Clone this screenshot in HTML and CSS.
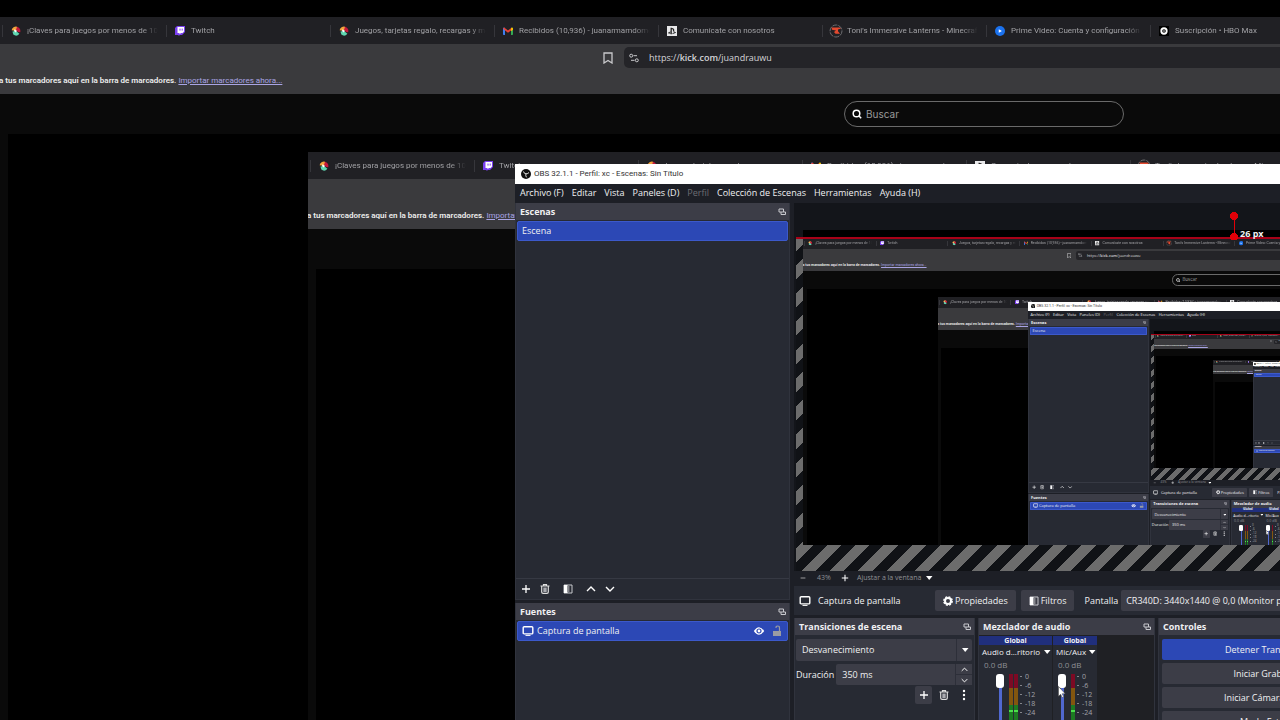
FILE: index.html
```html
<!DOCTYPE html>
<html lang="es">
<head>
    <meta charset="UTF-8">
    <meta name="viewport" content="width=device-width, initial-scale=1.0">
    <title>OBS 32.1.1</title>
    <link rel="stylesheet" href="styles.css">
</head>
<body>

<svg class="sprites" aria-hidden="true">
    <symbol id="i-wheel" viewBox="0 0 10 10">
        <path d="M5 5L.6 4.2A4.5 4.5 0 0 1 6 .7L7.5 3.2z" fill="#f2a33c"/>
        <path d="M5 4L6 .7a4.5 4.5 0 0 1 3.2 5.6L7 6z" fill="#c4183c"/>
        <path d="M1.5 5.5L5 5l3.4 2.8A4.5 4.5 0 0 1 2.3 8.6z" fill="#5fd6b0"/>
        <path d="M3.6 3.2L6 5 4.5 6.5 3 5z" fill="#fff"/>
    </symbol>
    <symbol id="i-twitch" viewBox="0 0 10 10">
        <path d="M0 2L2 0h8v6L7 9H5L3.5 10V9H0z" fill="#7a3ff0"/>
        <path d="M2.5 1H9v4.5L7.6 7H6L4.5 8.3V7h-2z" fill="#fff"/>
        <path d="M5 2.6v2M7.2 2.6v2" stroke="#7a3ff0"/>
    </symbol>
    <symbol id="i-gmail" viewBox="0 0 10 8">
        <path d="M0 .8h2V8H.6L0 7.4z" fill="#3f7fee"/>
        <path d="M8 .8h2v6.6L9.4 8H8z" fill="#34a853"/>
        <path d="M0 1.2L1.2.4 5 3.5 8.8.4 8 3.4 5 5.8 2 3.4z" fill="#ea4335"/>
        <path d="M8 1.2L9 .4l1 .8v1.6L8 4.2z" fill="#fbbc04"/>
    </symbol>
    <symbol id="i-ps" viewBox="0 0 11 11">
        <path d="M0 0h11v11H0z" fill="#e8e8ea"/>
        <path d="M4.6 2v7M4.6 2.5c2.5.4 3 1.2 2.6 3.2" fill="none" stroke="#222" stroke-width="1.4"/>
        <path d="M4 6.4L1.6 7.6 4 8M6 8.4l3.4-1.2L7 6.2" fill="none" stroke="#222"/>
    </symbol>
    <symbol id="i-toni" viewBox="0 0 14 14">
        <circle cx="7" cy="7" r="6" fill="none" stroke="#6d6d70" stroke-dasharray="5 1"/>
        <path d="M2.5 3.6h8l1.5 1-3 1v1.6l2 2.6H6.5L5 8l2-1.5-4-.7z" fill="#e2492f"/>
    </symbol>
    <symbol id="i-prime" viewBox="0 0 12 12">
        <circle cx="6" cy="6" r="6" fill="#1b72ee"/>
        <path d="M4.5 3.8L8.3 6 4.5 8.2z" fill="#fff"/>
    </symbol>
    <symbol id="i-hbo" viewBox="0 0 11 11">
        <path d="M0 0h11v11H0z" fill="#000"/>
        <circle cx="5.5" cy="5.5" r="3" fill="none" stroke="#fff" stroke-width="2"/>
        <circle cx="5.5" cy="5.5" r=".8" fill="#fff"/>
    </symbol>
    <symbol id="i-bookmark" viewBox="0 0 10 12">
        <path d="M1 1h8v10L5 8.5 1 11z" fill="none" stroke="#c9c9cc" stroke-width="1.3"/>
    </symbol>
    <symbol id="i-tune" viewBox="0 0 10 9">
        <g fill="none" stroke="#c9c9cc"><circle cx="2.2" cy="2.2" r="1.5"/><path d="M4.5 2.2H8M2 6.8h3.5"/><circle cx="7.8" cy="6.8" r="1.5"/></g>
    </symbol>
    <symbol id="i-search" viewBox="0 0 10 10">
        <g fill="none" stroke="#fff" stroke-width="1.5"><circle cx="4.5" cy="4.5" r="3.3"/><path d="M7 7l2.2 2.2"/></g>
    </symbol>
    <symbol id="i-obs" viewBox="0 0 10 10">
        <circle cx="5" cy="5" r="5" fill="#111"/>
        <path d="M2.5 2.5Q3 4.8 5 4.8T8 3.5M5 4.8Q4.3 7 5.5 8.3" fill="none" stroke="#ddd"/>
    </symbol>
    <symbol id="i-pop" viewBox="0 0 8 8">
        <path d="M1 1h4.5v3H1zM3 4v2.5h4.5V4H5.5" fill="none" stroke="#c8c9ce"/>
    </symbol>
    <symbol id="i-plus" viewBox="0 0 10 10">
        <path d="M5 1v8M1 5h8" stroke="#fff" stroke-width="1.3"/>
    </symbol>
    <symbol id="i-minus" viewBox="0 0 10 10">
        <path d="M2 5h6" stroke="#bbb"/>
    </symbol>
    <symbol id="i-trash" viewBox="0 0 10 10">
        <path d="M.5 2h9M3.5 1.8V.7h3v1.1M1.7 2.5V8q0 1.4 1.4 1.4h3.8Q8.3 9.4 8.3 8V2.5" fill="none" stroke="#ddd" stroke-width="1.2"/>
        <path d="M3.3 3.5h3.4V8H3.3z" fill="#aaabb0"/>
    </symbol>
    <symbol id="i-filter" viewBox="0 0 10 10">
        <path d="M1 1h8v8H1z" fill="none" stroke="#c8c9ce"/>
        <path d="M1 1h3.5v8H1z" fill="#fff"/><path d="M5 2h1.5v6H5z" fill="#85868c"/>
    </symbol>
    <symbol id="i-up" viewBox="0 0 10 10">
        <path d="M1 7l4-4 4 4" fill="none" stroke="#fff" stroke-width="1.4"/>
    </symbol>
    <symbol id="i-down" viewBox="0 0 10 10">
        <path d="M1 3l4 4 4-4" fill="none" stroke="#fff" stroke-width="1.4"/>
    </symbol>
    <symbol id="i-caret" viewBox="0 0 8 8">
        <path d="M1 2h6.5L4.2 6z" fill="#fff"/>
    </symbol>
    <symbol id="i-screen" viewBox="0 0 12 12">
        <rect x="1.2" y="1.7" width="9.6" height="7.2" rx="1" fill="none" stroke="#fff" stroke-width="1.4"/>
        <path d="M3.5 10.4h5" stroke="#fff"/>
    </symbol>
    <symbol id="i-eye" viewBox="0 0 12 10">
        <path d="M.8 5Q6-2.6 11.2 5 6 12.6.8 5z" fill="#fff"/>
        <circle cx="6" cy="5" r="2" fill="none" stroke="#2c48b5" stroke-width="1.2"/>
    </symbol>
    <symbol id="i-lock" viewBox="0 0 10 12">
        <path d="M1 6h8v5H1z" fill="#999ba3"/>
        <path d="M7.5 6V3Q7.5 1 5.7 1T4 3" fill="none" stroke="#999ba3" stroke-width="1.2"/>
    </symbol>
    <symbol id="i-gear" viewBox="0 0 10 10">
        <circle cx="5" cy="5" r="3" fill="none" stroke="#fff" stroke-width="2"/>
        <circle cx="5" cy="5" r="4.2" fill="none" stroke="#fff" stroke-width="1.4" stroke-dasharray="2 1.3"/>
    </symbol>
    <symbol id="i-dots" viewBox="0 0 10 12">
        <circle cx="5" cy="2" r="1.2" fill="#fff"/><circle cx="5" cy="6" r="1.2" fill="#fff"/><circle cx="5" cy="10" r="1.2" fill="#fff"/>
    </symbol>
</svg>

<div class="desktop">
    <div class="browser">
        <nav class="tabs">
            <a class="tab" href="#"><svg><use href="#i-wheel"/></svg><span>¡Claves para juegos por menos de 10€</span></a>
            <a class="tab" href="#"><svg><use href="#i-twitch"/></svg><span>Twitch</span></a>
            <a class="tab" href="#"><svg><use href="#i-wheel"/></svg><span>Juegos, tarjetas regalo, recargas y más</span></a>
            <a class="tab" href="#"><svg><use href="#i-gmail"/></svg><span>Recibidos (10,936) - juanarmamdomo</span></a>
            <a class="tab" href="#"><svg><use href="#i-ps"/></svg><span>Comunícate con nosotros</span></a>
            <a class="tab" href="#"><svg class="big"><use href="#i-toni"/></svg><span>Toni's Immersive Lanterns - Minecraft</span></a>
            <a class="tab" href="#"><svg><use href="#i-prime"/></svg><span>Prime Video: Cuenta y configuración</span></a>
            <a class="tab" href="#"><svg><use href="#i-hbo"/></svg><span>Suscripción • HBO Max</span></a>
        </nav>
        <div class="toolbar">
            <div class="address-row">
                <button class="bookmark" aria-label="Marcador"><svg><use href="#i-bookmark"/></svg></button>
                <div class="address"><svg><use href="#i-tune"/></svg><span>https://<b>kick.com</b>/juandrauwu</span></div>
            </div>
            <p class="bookmarks">a tus marcadores aquí en la barra de marcadores. <a href="#">Importar marcadores ahora...</a></p>
        </div>
        <div class="page">
            <header class="page-header">
                <label class="search"><svg><use href="#i-search"/></svg><input type="text" placeholder="Buscar" aria-label="Buscar"></label>
            </header>
            <div class="stream"></div>
        </div>
    </div>

    <div class="obs">
        <div class="titlebar"><svg><use href="#i-obs"/></svg>OBS 32.1.1 - Perfil: xc - Escenas: Sin Título</div>
        <nav class="menu">
            <button>Archivo (F)</button>
            <button>Editar</button>
            <button>Vista</button>
            <button>Paneles (D)</button>
            <button disabled>Perfil</button>
            <button>Colección de Escenas</button>
            <button>Herramientas</button>
            <button>Ayuda (H)</button>
        </nav>
        <div class="workspace">
            <div class="side">
                <section class="dock scenes">
                    <h2>Escenas <svg><use href="#i-pop"/></svg></h2>
                    <div class="item">Escena</div>
                    <div class="dock-tools">
                        <button aria-label="Añadir"><svg><use href="#i-plus"/></svg></button>
                        <button aria-label="Eliminar"><svg><use href="#i-trash"/></svg></button>
                        <button class="split" aria-label="Filtros"><svg><use href="#i-filter"/></svg></button>
                        <button aria-label="Subir"><svg><use href="#i-up"/></svg></button>
                        <button aria-label="Bajar"><svg><use href="#i-down"/></svg></button>
                    </div>
                </section>
                <section class="dock sources">
                    <h2>Fuentes <svg><use href="#i-pop"/></svg></h2>
                    <div class="item"><svg><use href="#i-screen"/></svg><span>Captura de pantalla</span><svg><use href="#i-eye"/></svg><svg><use href="#i-lock"/></svg></div>
                </section>
            </div>
            <div class="main">
                <div class="preview">
                    <div class="canvas">
                        <div class="capture"></div>
                        <div class="guide">26 px</div>
                    </div>
                </div>
                <div class="zoombar">
                    <button aria-label="Alejar"><svg><use href="#i-minus"/></svg></button>
                    <span class="percent">43%</span>
                    <button aria-label="Acercar"><svg><use href="#i-plus"/></svg></button>
                    <button class="fit">Ajustar a la ventana <svg><use href="#i-caret"/></svg></button>
                </div>
                <div class="context">
                    <svg><use href="#i-screen"/></svg>
                    <span class="source-name">Captura de pantalla</span>
                    <button><svg><use href="#i-gear"/></svg>Propiedades</button>
                    <button><svg><use href="#i-filter"/></svg>Filtros</button>
                    <label>Pantalla
                        <select><option>CR340D: 3440x1440 @ 0,0 (Monitor principal)</option></select>
                    </label>
                </div>
                <div class="bottom">
                    <section class="dock transitions">
                        <h2>Transiciones de escena <svg><use href="#i-pop"/></svg></h2>
                        <div class="combo">
                            <select aria-label="Transición"><option>Desvanecimiento</option></select>
                            <svg><use href="#i-caret"/></svg>
                        </div>
                        <div class="duration">
                            <label>Duración <input type="text" value="350 ms"></label>
                            <div class="spin">
                                <button aria-label="Más"><svg><use href="#i-up"/></svg></button>
                                <button aria-label="Menos"><svg><use href="#i-down"/></svg></button>
                            </div>
                        </div>
                        <div class="transition-tools">
                            <button class="filled" aria-label="Añadir"><svg><use href="#i-plus"/></svg></button>
                            <button aria-label="Eliminar"><svg><use href="#i-trash"/></svg></button>
                            <button aria-label="Opciones"><svg><use href="#i-dots"/></svg></button>
                        </div>
                    </section>
                    <section class="dock mixer">
                        <h2>Mezclador de audio <svg><use href="#i-pop"/></svg></h2>
                        <div class="channels">
                            <div class="channel desktop-audio">
                                <div class="scope">Global</div>
                                <button class="name">Audio d...ritorio <svg><use href="#i-caret"/></svg></button>
                                <div class="db">0.0 dB</div>
                                <div class="levels">
                                    <input type="range" value="100" aria-label="Volumen del escritorio">
                                    <div class="meter"></div><div class="meter"></div>
                                    <ul><li>0</li><li>-6</li><li>-12</li><li>-18</li><li>-24</li></ul>
                                </div>
                            </div>
                            <div class="channel mic">
                                <div class="scope">Global</div>
                                <button class="name">Mic/Aux <svg><use href="#i-caret"/></svg></button>
                                <div class="db">0.0 dB</div>
                                <div class="levels">
                                    <input type="range" value="100" aria-label="Volumen del micrófono">
                                    <div class="meter"></div>
                                    <ul><li>0</li><li>-6</li><li>-12</li><li>-18</li><li>-24</li></ul>
                                </div>
                            </div>
                        </div>
                    </section>
                    <section class="dock controls">
                        <h2>Controles</h2>
                        <button class="active">Detener Transmisión</button>
                        <button>Iniciar Grabación</button>
                        <button>Iniciar Cámara Virtual</button>
                        <button>Modo Estudio</button>
                    </section>
                </div>
            </div>
        </div>
    </div>

    <svg class="cursor" viewBox="0 0 8 12"><path d="M.5.5v9.8l2.2-2 1.5 3.2 1.5-.7-1.5-3.1h3z" fill="#fff" stroke="#444" stroke-width=".5"/></svg>
</div>

<script>
    const desktop = document.querySelector('.desktop');
    const browser = desktop.querySelector('.browser');

    function copyOf(element) {
        const copy = element.cloneNode(true);
        copy.setAttribute('aria-hidden', 'true');
        copy.inert = true;
        return copy;
    }

    // the stream in the page plays back the browser itself
    browser.querySelector('.stream').appendChild(copyOf(browser));

    // the OBS preview shows the whole desktop, preview included
    const frame = copyOf(desktop);
    let slot = desktop.querySelector('.capture');
    for (let i = 0; i < 2; i++) {
        const copy = frame.cloneNode(true);
        slot.appendChild(copy);
        slot = copy.querySelector('.capture');
    }
</script>

</body>
</html>
```
FILE: styles.css
```css
* {
    box-sizing: border-box;
}
body {
    margin: 0;
    background: #000;
    overflow: hidden;
}
button, input, select {
    font: inherit;
    color: inherit;
    background: none;
    border: none;
    padding: 0;
    margin: 0;
    border-radius: 0;
}
svg {
    display: block;
    flex: none;
    width: 10px;
    height: 10px;
}
.sprites {
    display: none;
}
.desktop {
    position: relative;
    height: 100vh;
    background: #000;
    overflow: hidden;
}

/* browser */
.browser {
    height: 100%;
    padding-top: 17px;
    display: flex;
    flex-direction: column;
    font-family: Roboto, sans-serif;
    font-size: 8px;
    overflow: hidden;
}
.tabs {
    flex: none;
    display: flex;
    align-items: center;
    height: 27px;
    padding-left: 2px;
    background: #202024;
}
.tab {
    flex: 0 0 164px;
    display: flex;
    align-items: center;
    gap: 6px;
    min-width: 0;
    height: 12px;
    padding: 0 8px;
    border-left: 1px solid #36363b;
    color: #a0a0a4;
    text-decoration: none;
    line-height: 12px;
}
.tab svg.big {
    width: 14px;
    height: 14px;
    margin: 0 -2px;
}
.tab span {
    flex: 1;
    min-width: 0;
    overflow: hidden;
    white-space: nowrap;
    mask-image: linear-gradient(to right, #000 88%, transparent);
}
.toolbar {
    flex: none;
    height: 50px;
    padding-top: 3px;
    background: #3a3a3d;
}
.address-row {
    display: flex;
    align-items: center;
    gap: 11px;
    padding-left: 603px;
}
.bookmark svg {
    height: 12px;
}
.address {
    flex: 1;
    display: flex;
    align-items: center;
    gap: 10px;
    height: 21px;
    padding-left: 5px;
    border-radius: 5px 0 0 5px;
    background: #242428;
    color: #d4d4d8;
    font-size: 9px;
    font-family: "Open Sans", sans-serif;
    white-space: nowrap;
}
.address b {
    font-weight: 600;
}
.bookmarks {
    margin: 7px 0 0 -1px;
    color: #eee;
    font-weight: 600;
    line-height: 12px;
    white-space: nowrap;
}
.bookmarks a {
    color: #a9a4e4;
    font-weight: 400;
}
.page {
    flex: 1;
    display: flex;
    flex-direction: column;
    background: #0a0a0a;
}
.page-header {
    height: 40px;
    padding: 7px 0 0 844px;
}
.search {
    display: flex;
    align-items: center;
    gap: 4px;
    width: 280px;
    height: 26px;
    padding: 0 7px;
    border: 1px solid #6a6a6a;
    border-radius: 13px;
    color: #9a9a9a;
    font: 10px Inter, sans-serif;
}
.search input {
    width: 100%;
}
.search input::placeholder {
    color: #9a9a9a;
}
.stream {
    position: relative;
    flex: 1;
    margin-left: 8px;
    background: #000;
    overflow: hidden;
}
.stream .browser {
    position: absolute;
    top: 1px;
    left: 300px;
    width: 100%;
}

/* OBS window */
.obs {
    position: absolute;
    top: 164px;
    left: 515px;
    right: -100px;
    bottom: -54px;
    display: flex;
    flex-direction: column;
    background: #1d1f26;
    color: #f0f0f2;
    font-family: "Open Sans", sans-serif;
    font-size: 8px;
    line-height: 12px;
}
.titlebar {
    flex: none;
    display: flex;
    align-items: center;
    gap: 3px;
    height: 20px;
    padding-left: 6px;
    background: #fff;
    color: #333;
    font-family: Roboto, sans-serif;
}
.menu {
    flex: none;
    display: flex;
    align-items: center;
    gap: 8px;
    height: 18px;
    margin-bottom: 1px;
    padding-left: 5px;
    font-size: 9px;
}
.menu button:disabled {
    color: #6c6d73;
}
.workspace {
    flex: 1;
    display: flex;
    gap: 4px;
    min-height: 0;
}
.side {
    flex: 0 0 275px;
    display: flex;
    flex-direction: column;
    gap: 3px;
}
.dock {
    background: #272a33;
    border: 1px solid #30333d;
    border-top: none;
}
.dock h2 {
    display: flex;
    align-items: center;
    justify-content: space-between;
    height: 17px;
    margin: 0;
    padding: 0 3px 0 4px;
    background: #3c3d47;
    font-size: 9px;
    font-weight: 700;
}
.dock h2 svg {
    width: 8px;
    height: 8px;
}
.scenes {
    flex: 1;
    display: flex;
    flex-direction: column;
}
.sources {
    flex: 0 0 171px;
}
.item {
    display: flex;
    align-items: center;
    gap: 3px;
    height: 20px;
    margin: 1px;
    padding: 0 4px;
    border: 1px solid #3c59cb;
    border-radius: 2px;
    background: #2c48b5;
    font-size: 9px;
}
.item svg {
    width: 12px;
    height: 12px;
}
.item svg + svg {
    margin-left: 3px;
}
.item span {
    flex: 1;
}
.dock-tools {
    display: flex;
    align-items: center;
    gap: 9px;
    height: 21px;
    margin-top: auto;
    padding-left: 5px;
    border-top: 1px solid #363943;
}
.dock-tools .split {
    padding: 0 4px;
}
.main {
    flex: 1;
    display: flex;
    flex-direction: column;
    min-width: 0;
}
.preview {
    flex: 1;
    padding: 34px 0 0 2px;
    background: #13151a;
    overflow: hidden;
}
.canvas {
    position: relative;
    height: 100%;
    background: repeating-linear-gradient(135deg, #6c6c6c 0 10px, #101216 10px 20px);
}
.canvas::after {
    content: "";
    position: absolute;
    top: 0;
    left: 0;
    right: 0;
    height: 2px;
    background: #a80218;
}
.capture {
    position: absolute;
    top: -7px;
    left: 7px;
    right: 0;
    bottom: 26px;
}
.capture > .desktop {
    zoom: 0.4375;
    height: 100%;
}
.guide {
    position: absolute;
    z-index: 1;
    top: -25px;
    left: 434px;
    padding: 16px 0 0 10px;
    font-weight: 700;
    font-size: 9px;
    background:
        radial-gradient(circle at 4px 4px, #e00008 4px, transparent 4px),
        radial-gradient(circle at 4px 25px, #e00008 4px, transparent 4px),
        linear-gradient(#e00008, #e00008) 4px 0 / 1px 100% no-repeat;
}
.zoombar {
    flex: none;
    display: flex;
    align-items: center;
    height: 13px;
    margin-bottom: 2px;
    padding-left: 5px;
    color: #8e8f94;
    font-size: 7px;
}
.zoombar svg {
    width: 8px;
    height: 8px;
}
.zoombar .percent {
    width: 34px;
    text-align: center;
}
.zoombar .fit {
    display: flex;
    align-items: center;
    gap: 4px;
    margin-left: 8px;
    line-height: 12px;
}
.context {
    flex: none;
    display: flex;
    align-items: center;
    gap: 5px;
    height: 29px;
    margin-bottom: 3px;
    padding-left: 5px;
    background: #272a33;
    font-size: 9px;
    white-space: nowrap;
}
.context > svg {
    width: 12px;
    height: 12px;
}
.source-name {
    width: 114px;
    padding-left: 2px;
}
.context button {
    display: flex;
    align-items: center;
    gap: 2px;
    height: 21px;
    padding: 0 8px;
    border-radius: 2px;
    background: #3c3d47;
}
.context label {
    flex: 1;
    display: flex;
    align-items: center;
    gap: 3px;
    padding-left: 5px;
}
.context select {
    flex: 1;
    appearance: none;
    height: 21px;
    padding-left: 5px;
    border-radius: 2px;
    background: #3c3d47;
}
.bottom {
    flex: 0 0 156px;
    display: flex;
    gap: 3px;
}
.transitions {
    flex: 0 0 181px;
    font-size: 9px;
}
.combo {
    display: flex;
    align-items: center;
    height: 22px;
    margin: 4px 2px 3px 1px;
    padding-right: 3px;
    border-radius: 2px;
    background: #3c3d47;
}
.combo select {
    flex: 1;
    appearance: none;
    height: 100%;
    padding-left: 6px;
    border-right: 1px solid #2d2f39;
}
.combo svg {
    width: 8px;
    height: 8px;
    margin-left: 4px;
}
.duration {
    display: flex;
    height: 21px;
    margin: 0 2px 0 1px;
}
.duration label {
    flex: 1;
    display: flex;
    align-items: center;
    gap: 2px;
}
.duration input {
    flex: 1;
    width: 0;
    height: 100%;
    padding-left: 6px;
    border-radius: 2px 0 0 2px;
    background: #3c3d47;
}
.spin {
    display: flex;
    flex-direction: column;
    width: 17px;
    border-left: 1px solid #2d2f39;
    background: #3c3d47;
}
.spin button {
    flex: 1;
    display: flex;
    align-items: center;
    justify-content: center;
}
.spin button + button {
    border-top: 1px solid #2d2f39;
}
.spin svg {
    width: 7px;
    height: 7px;
}
.transition-tools {
    display: flex;
    justify-content: flex-end;
    gap: 3px;
    margin: 1px 2px 0;
}
.transition-tools button {
    display: flex;
    align-items: center;
    justify-content: center;
    width: 17px;
    height: 18px;
    border-radius: 2px;
}
.transition-tools .filled {
    background: #3c3d47;
}
.transition-tools svg {
    height: 12px;
}
.mixer {
    flex: 0 0 177px;
    background: #1f2024;
}
.channels {
    display: flex;
    gap: 1px;
    margin-top: 1px;
}
.channel {
    height: 136px;
    background: #272a33;
    font-size: 8px;
}
.desktop-audio {
    width: 73px;
}
.mic {
    width: 44px;
}
.scope {
    height: 9px;
    background: #202f7d;
    font-size: 7px;
    font-weight: 700;
    line-height: 9px;
    text-align: center;
}
.name {
    display: flex;
    align-items: center;
    justify-content: space-between;
    width: 100%;
    height: 14px;
    padding: 0 1px 0 3px;
    white-space: nowrap;
}
.name svg {
    width: 8px;
    height: 8px;
}
.db {
    padding-left: 5px;
    color: #8e8f94;
}
.levels {
    display: flex;
    height: 90px;
    margin-top: 3px;
    padding-left: 17px;
}
.mic .levels {
    padding-left: 5px;
}
.levels input {
    appearance: none;
    writing-mode: vertical-lr;
    direction: rtl;
    width: 8px;
    height: 90px;
    margin-right: 5px;
    background: linear-gradient(#5068d0, #5068d0) 3px 0 / 3px 100% no-repeat;
}
.levels input::-webkit-slider-thumb {
    appearance: none;
    width: 8px;
    height: 14px;
    border-radius: 3px;
    background: #fff;
}
.meter {
    width: 5px;
    border-right: 1px solid #272a33;
    background: linear-gradient(#7c0a24 0 14px, #83560f 14px 31px, #1d7a22 31px 36px, #4be04b 36px 38px, #1d7a22 38px);
}
.levels ul {
    margin: 0 0 0 1px;
    padding: 0;
    list-style: none;
    color: #a2a3a8;
    font-size: 7px;
    line-height: 9px;
}
.levels li {
    display: flex;
    align-items: center;
    gap: 3px;
}
.levels li:first-child {
    margin-top: -2px;
}
.levels li::before {
    content: "";
    width: 2px;
    height: 1px;
    background: #85868c;
}
.controls {
    flex: 1;
    display: flex;
    flex-direction: column;
    gap: 3px;
}
.controls button {
    flex: none;
    height: 21px;
    margin: 0 3px;
    border-radius: 2px;
    background: #3c3d47;
    font-size: 9px;
}
.controls .active {
    margin-top: 1px;
    background: #2c48b5;
}

.cursor {
    position: absolute;
    top: 686px;
    left: 1058px;
    width: 8px;
    height: 12px;
}
```
